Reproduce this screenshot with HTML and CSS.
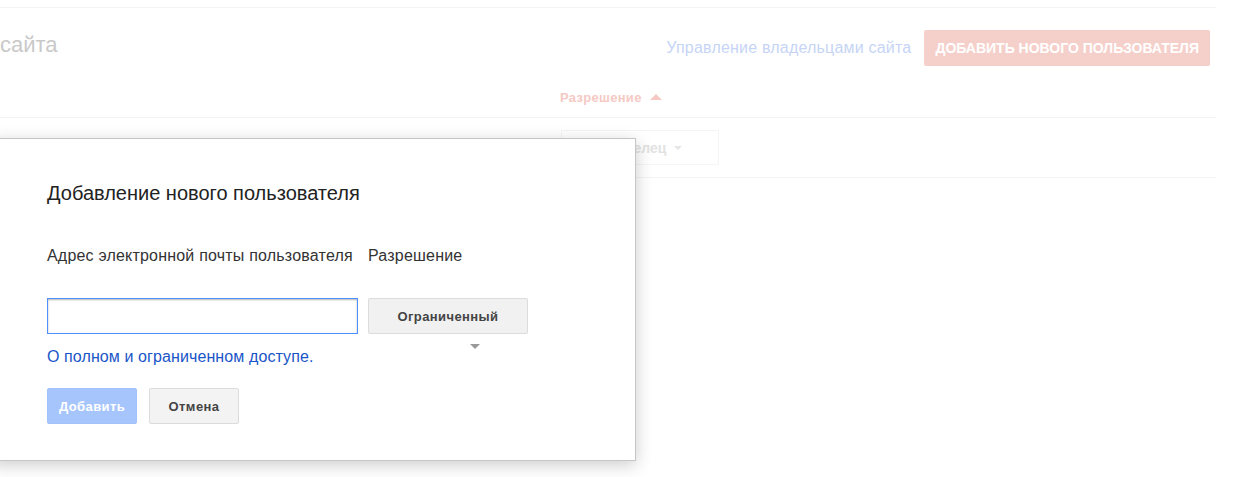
FILE: index.html
```html
<!DOCTYPE html>
<html lang="ru">
<head>
  <meta charset="UTF-8" />
  <meta name="viewport" content="width=device-width, initial-scale=1.0"/>
  <title>Пользователи и владельцы сайта</title>
  <link rel="stylesheet" href="styles.css">
</head>
<body>

  <!-- ===== Page behind the dialog (faded) ===== -->
  <div class="page">
    <div class="page-head">
      <h1 class="page-title">сайта</h1>
      <div class="head-actions">
        <a href="#" class="owners-link">Управление владельцами сайта</a>
        <a href="#" class="add-user-btn">Добавить нового пользователя</a>
      </div>
    </div>

    <div class="table-head">
      <span class="sort-col">Разрешение <span class="sort-arrow"></span></span>
    </div>

    <div class="table-row">
      <span class="perm-select">Владелец <span class="caret"></span></span>
    </div>
  </div>

  <!-- ===== Add User Dialog ===== -->
  <div class="dialog">
    <h2 class="dialog-title">Добавление нового пользователя</h2>

    <div class="form-grid">
      <label class="field-label" for="email">Адрес электронной почты пользователя</label>
      <span class="field-label">Разрешение</span>
      <input type="text" id="email" class="email-input">
      <div class="select-wrap">
        <button class="select-btn">Ограниченный</button>
        <span class="select-caret"></span>
      </div>
    </div>

    <a href="#" class="help-link">О полном и ограниченном доступе.</a>

    <div class="dialog-buttons">
      <button class="btn btn-primary" disabled>Добавить</button>
      <button class="btn">Отмена</button>
    </div>
  </div>

</body>
</html>
```

FILE: styles.css
```css
body {
  font-family: 'Liberation Sans', Arial, sans-serif;
  margin: 0;
  padding: 0;
  background: #fff;
  color: #222;
  overflow: hidden;
  height: 477px;
  position: relative;
}

/* ===== Faded page ===== */
.page {
  width: 1216px;
  margin-top: 7px;
  border-top: 1px solid #f4f4f4;
}
.page-head {
  display: flex;
  justify-content: space-between;
  align-items: center;
  padding: 22px 6px 0 0;
  height: 36px;
}
.page-title {
  margin: -6px 0 0 0;
  font-size: 22px;
  font-weight: normal;
  color: #c9c9c9;
}
.head-actions {
  display: flex;
  align-items: center;
  gap: 13px;
}
.owners-link {
  color: #c6d5f6;
  text-decoration: none;
  font-size: 16px;
  letter-spacing: 0.2px;
}
.add-user-btn {
  display: inline-block;
  background: #f5d0cb;
  color: #fff;
  font-size: 14px;
  font-weight: bold;
  text-transform: uppercase;
  text-decoration: none;
  padding: 0 11px;
  line-height: 36px;
  border-radius: 2px;
}

.table-head {
  height: 37px;
  margin-top: 14px;
  border-bottom: 1px solid #f4f4f4;
  display: flex;
  align-items: center;
  padding-left: 560px;
}
.sort-col {
  color: #f5c9c4;
  font-size: 13px;
  font-weight: bold;
  letter-spacing: 0.3px;
  margin-top: -3px;
}
.sort-arrow {
  display: inline-block;
  margin-left: 4px;
  border-left: 6px solid transparent;
  border-right: 6px solid transparent;
  border-bottom: 6px solid #f5c9c4;
  vertical-align: 2px;
}

.table-row {
  height: 59px;
  border-bottom: 1px solid #f4f4f4;
  display: flex;
  align-items: center;
  padding-left: 561px;
}
.perm-select {
  width: 156px;
  height: 33px;
  border: 1px solid #f5f5f5;
  display: flex;
  align-items: center;
  justify-content: center;
  gap: 8px;
  color: #e2e2e2;
  font-size: 14px;
  font-weight: bold;
}
.caret {
  border-left: 4px solid transparent;
  border-right: 4px solid transparent;
  border-top: 4px solid #e6e6e6;
}

/* ===== Dialog ===== */
.dialog {
  position: absolute;
  top: 138px;
  left: -10px;
  width: 588px;
  padding: 42px 0 36px 56px;
  background: #fff;
  border: 1px solid #c6c6c6;
  box-shadow: 0 4px 16px rgba(0,0,0,0.2);
}
.dialog-title {
  margin: 0;
  font-size: 20px;
  line-height: 24px;
  font-weight: normal;
  color: #222;
}
.form-grid {
  display: grid;
  grid-template-columns: 311px 160px;
  column-gap: 10px;
  row-gap: 32px;
  margin-top: 41px;
}
.field-label {
  font-size: 16px;
  line-height: 20px;
  color: #333;
  letter-spacing: 0.2px;
  white-space: nowrap;
}
.email-input {
  box-sizing: border-box;
  height: 36px;
  margin: 0;
  border: 1px solid #4d90fe;
  box-shadow: inset 0 1px 2px rgba(0,0,0,0.3);
  outline: none;
}
.select-wrap { position: relative; }
.select-btn {
  width: 160px;
  height: 36px;
  background: #f1f1f1;
  border: 1px solid #dcdcdc;
  border-radius: 2px;
  font-family: inherit;
  font-size: 13px;
  font-weight: bold;
  letter-spacing: 0.4px;
  color: #444;
}
.select-caret {
  position: absolute;
  left: 102px;
  top: 46px;
  border-left: 5px solid transparent;
  border-right: 5px solid transparent;
  border-top: 5px solid #999;
}
.help-link {
  display: block;
  margin-top: 13px;
  font-size: 16px;
  line-height: 20px;
  color: #1a55c8;
  letter-spacing: 0.1px;
  text-decoration: none;
}
.dialog-buttons {
  display: flex;
  gap: 12px;
  margin-top: 21px;
}
.btn {
  width: 90px;
  height: 36px;
  background: #f3f3f3;
  border: 1px solid #dcdcdc;
  border-radius: 2px;
  font-family: inherit;
  font-size: 13px;
  font-weight: bold;
  letter-spacing: 0.4px;
  color: #444;
}
.btn-primary {
  background: #a6c5fd;
  border-color: #a1c1fb;
  color: #fff;
}
```
